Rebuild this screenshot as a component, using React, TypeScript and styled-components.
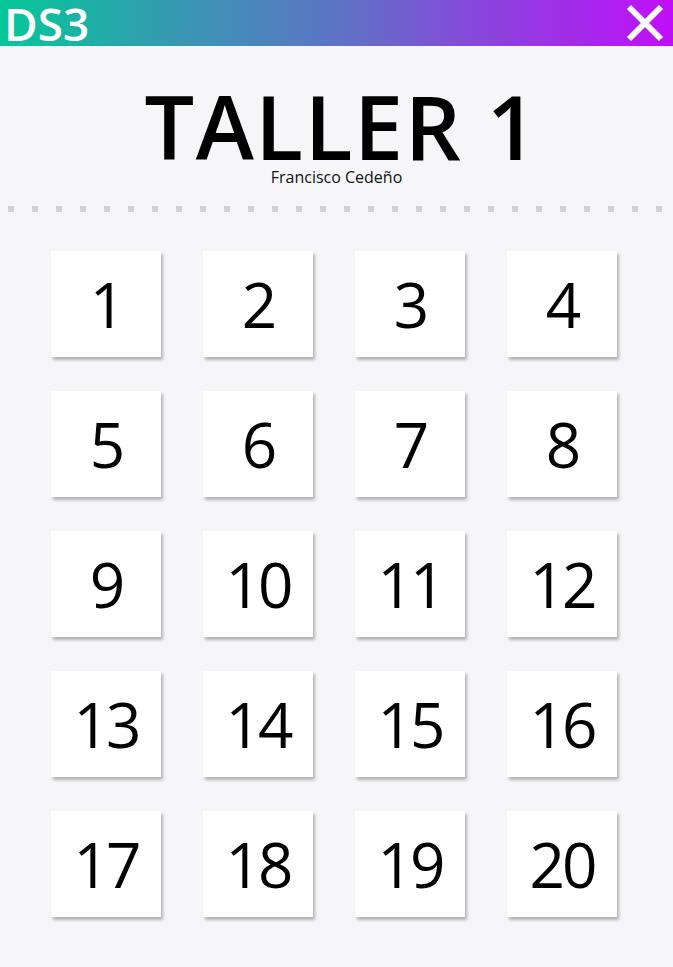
import React from "react"
import styled, { createGlobalStyle } from "styled-components"

const GlobalStyle = createGlobalStyle`
  html, body {
    margin: 0;
    padding: 0;
    background: #f6f6f8;
    font-family: "Open Sans", "Noto Sans", sans-serif;
  }
`

const Page = styled.div`
  min-height: 967px;
  background: #f6f6f8;
`

const Header = styled.header`
  height: 46px;
  display: flex;
  align-items: center;
  justify-content: space-between;
  padding: 0 8px 0 4px;
  background: linear-gradient(90deg, #04c898 0%, #3e92b6 30%, #5d74c4 50%, #8f3fe0 75%, #c10ef8 100%);
`

const Logo = styled.span`
  color: white;
  font-size: 46px;
  font-weight: 600;
  line-height: 46px;
`

const CloseButton = styled.button`
  border: none;
  background: none;
  padding: 0;
  width: 40px;
  height: 40px;
  display: flex;
  align-items: center;
  justify-content: center;
  cursor: pointer;
`

const TitleBlock = styled.div`
  display: flex;
  flex-direction: column;
  align-items: center;
  padding-top: 47px;
`

const Title = styled.h1`
  margin: 0;
  padding-left: 10px;
  font-size: 88px;
  font-weight: 600;
  line-height: 66px;
  letter-spacing: 1.5px;
  color: #000;
`

const Subtitle = styled.div`
  font-size: 16px;
  line-height: 20px;
  color: #111;
  margin-top: 8px;
`

const Dots = styled.div`
  margin: 19px 0 0 8px;
  height: 6px;
  background-image: linear-gradient(90deg, #d0d0d4 6px, transparent 6px);
  background-size: 24px 6px;
  background-repeat: repeat-x;
`

const Grid = styled.div`
  display: grid;
  grid-template-columns: repeat(4, 110px);
  column-gap: 42px;
  row-gap: 34px;
  padding: 39px 0 0 51px;
`

const Card = styled.a`
  width: 110px;
  height: 106px;
  background: #fff;
  box-shadow: 2px 3px 3px rgba(0, 0, 0, 0.28);
  display: flex;
  align-items: center;
  justify-content: center;
  font-size: 62px;
  font-weight: 400;
  letter-spacing: -3px;
  color: #000;
  text-decoration: none;
`

const App: React.FC = () => {
  const items = Array.from({ length: 20 }, (_, i) => i + 1)
  return (
    <Page>
      <GlobalStyle />
      <Header>
        <Logo>DS3</Logo>
        <CloseButton aria-label="cerrar">
          <svg width="38" height="38" viewBox="0 0 38 38">
            <path d="M3 3 L35 35 M35 3 L3 35" stroke="#fff" strokeWidth="6" />
          </svg>
        </CloseButton>
      </Header>
      <TitleBlock>
        <Title>TALLER 1</Title>
        <Subtitle>Francisco Cedeño</Subtitle>
      </TitleBlock>
      <Dots />
      <Grid>
        {items.map((n) => (
          <Card key={n} href="#">
            {n}
          </Card>
        ))}
      </Grid>
    </Page>
  )
}

export default App
